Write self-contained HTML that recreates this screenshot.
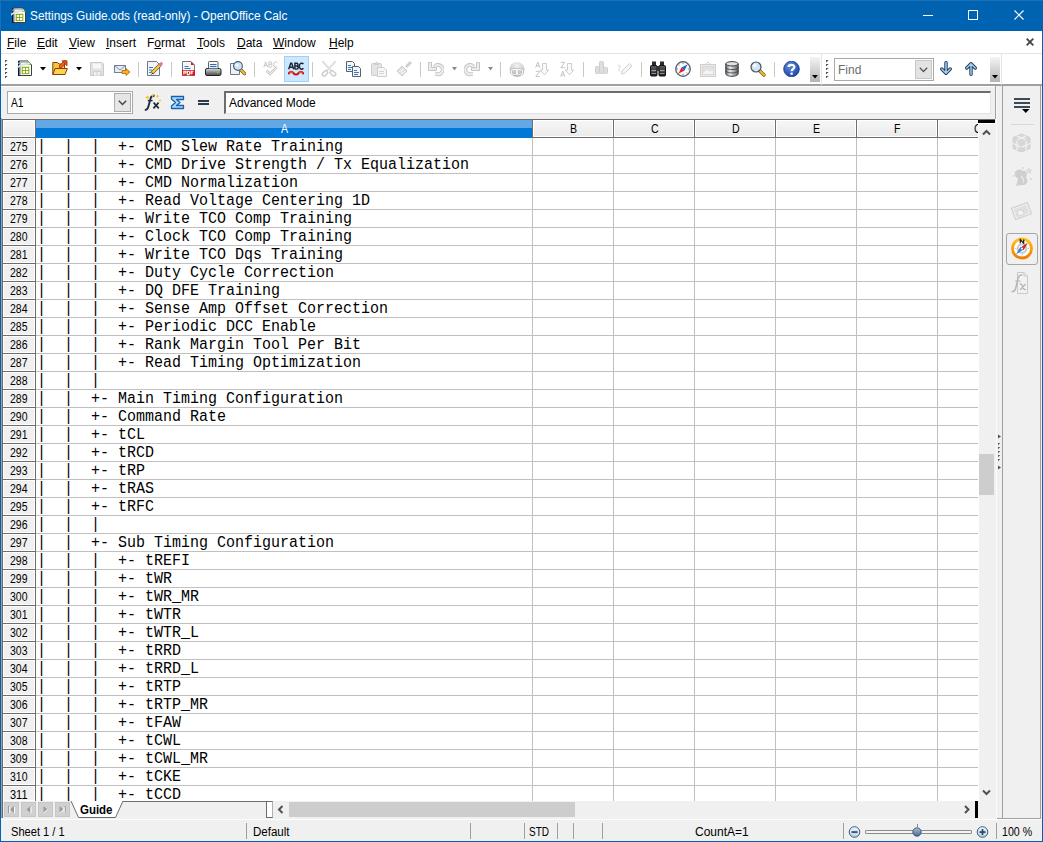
<!DOCTYPE html>
<html><head><meta charset="utf-8"><style>
html,body{margin:0;padding:0;width:1043px;height:842px;overflow:hidden;background:#f0f0f0}
body{position:relative}
</style></head><body>
<div style="position:absolute;left:0px;top:0px;width:1043px;height:842px;background:#f0f0f0"></div>
<div style="position:absolute;left:0px;top:0px;width:1043px;height:31px;background:#0063b1"></div>
<div style="position:absolute;left:0px;top:0px;width:1px;height:842px;background:#0063b1"></div>
<div style="position:absolute;left:1042px;top:0px;width:1px;height:842px;background:#0063b1"></div>
<div style="position:absolute;left:0px;top:841px;width:1043px;height:1px;background:#0063b1"></div>
<div style="position:absolute;left:0px;top:0px;width:1043px;height:1px;background:#1c70b7"></div>
<div style="position:absolute;left:0px;top:0px;width:1px;height:31px;background:#1c70b7"></div>
<div style="position:absolute;left:30.2px;top:9px;white-space:pre;font:12px 'Liberation Sans', sans-serif;color:#fff;transform:scaleX(0.9853);transform-origin:0 0;">Settings Guide.ods (read-only) - OpenOffice Calc</div>
<svg style="position:absolute;left:11px;top:7px;" width="16" height="17" viewBox="0 0 16 17"><path d="M1.5 1H11L14.5 4.5V15.5H1.5Z" fill="#fcfdfd" stroke="#3a4046" stroke-width="1"/>
<rect x="1" y="1" width="1.6" height="15" fill="#0d1824"/>
<rect x="2.6" y="2" width="1.2" height="13" fill="#6f8aa6" opacity="0.7"/>
<path d="M11 1V4.5H14.5" fill="#dfe8c0" stroke="#7f9a20" stroke-width="0.9"/>
<path d="M-0.5 8C3 5 7 3.8 13 3.6" stroke="#d9e1e8" stroke-width="1.7" fill="none"/>
<path d="M1 3.4C4 2.2 7.5 2 11 2.4" stroke="#a9b7c4" stroke-width="1" fill="none"/>
<rect x="4.7" y="6.8" width="7.6" height="7.3" fill="#8aab00"/>
<rect x="5.8" y="7.9" width="2.3" height="2.2" fill="#fff"/><rect x="9" y="7.9" width="2.3" height="2.2" fill="#fff"/>
<rect x="5.8" y="11" width="2.3" height="2.2" fill="#fff"/><rect x="9" y="11" width="2.3" height="2.2" fill="#fff"/></svg>
<div style="position:absolute;left:923px;top:15px;width:10px;height:1px;background:#fff"></div>
<div style="position:absolute;left:968px;top:10px;width:10px;height:10px;border:1px solid #fff;box-sizing:border-box"></div>
<svg style="position:absolute;left:1014px;top:10px;" width="10" height="10" viewBox="0 0 10 10"><path d="M0.5 0.5L9.5 9.5M9.5 0.5L0.5 9.5" stroke="#fff" stroke-width="1.1"/></svg>
<div style="position:absolute;left:1px;top:31px;width:1041px;height:22px;background:#fff"></div>
<div style="position:absolute;left:1px;top:53px;width:1041px;height:1px;background:#e3e3e3"></div>
<div style="position:absolute;left:7px;top:36px;white-space:pre;font:12px 'Liberation Sans', sans-serif;color:#000;"><u style="text-decoration-thickness:1px;text-underline-offset:1px">F</u>ile</div>
<div style="position:absolute;left:37px;top:36px;white-space:pre;font:12px 'Liberation Sans', sans-serif;color:#000;"><u style="text-decoration-thickness:1px;text-underline-offset:1px">E</u>dit</div>
<div style="position:absolute;left:69px;top:36px;white-space:pre;font:12px 'Liberation Sans', sans-serif;color:#000;"><u style="text-decoration-thickness:1px;text-underline-offset:1px">V</u>iew</div>
<div style="position:absolute;left:106px;top:36px;white-space:pre;font:12px 'Liberation Sans', sans-serif;color:#000;"><u style="text-decoration-thickness:1px;text-underline-offset:1px">I</u>nsert</div>
<div style="position:absolute;left:147px;top:36px;white-space:pre;font:12px 'Liberation Sans', sans-serif;color:#000;">F<u style="text-decoration-thickness:1px;text-underline-offset:1px">o</u>rmat</div>
<div style="position:absolute;left:197px;top:36px;white-space:pre;font:12px 'Liberation Sans', sans-serif;color:#000;"><u style="text-decoration-thickness:1px;text-underline-offset:1px">T</u>ools</div>
<div style="position:absolute;left:237px;top:36px;white-space:pre;font:12px 'Liberation Sans', sans-serif;color:#000;"><u style="text-decoration-thickness:1px;text-underline-offset:1px">D</u>ata</div>
<div style="position:absolute;left:273px;top:36px;white-space:pre;font:12px 'Liberation Sans', sans-serif;color:#000;"><u style="text-decoration-thickness:1px;text-underline-offset:1px">W</u>indow</div>
<div style="position:absolute;left:329px;top:36px;white-space:pre;font:12px 'Liberation Sans', sans-serif;color:#000;"><u style="text-decoration-thickness:1px;text-underline-offset:1px">H</u>elp</div>
<svg style="position:absolute;left:1026px;top:38px;" width="8" height="8" viewBox="0 0 8 8"><path d="M0.7 0.7L7.3 7.3M7.3 0.7L0.7 7.3" stroke="#444" stroke-width="1.8"/></svg>
<div style="position:absolute;left:1px;top:54px;width:1041px;height:31px;background:#fff"></div>
<div style="position:absolute;left:1px;top:84px;width:1041px;height:2px;background:#a0a0a0"></div>
<svg style="position:absolute;left:5px;top:60px;" width="3" height="20" viewBox="0 0 3 20"><path d="M0 0H2.6L0 2.6Z" fill="#505050"/><path d="M0 4H2.6L0 6.6Z" fill="#505050"/><path d="M0 8H2.6L0 10.6Z" fill="#505050"/><path d="M0 12H2.6L0 14.6Z" fill="#505050"/><path d="M0 16H2.6L0 18.6Z" fill="#505050"/></svg>
<svg style="position:absolute;left:17px;top:60px;" width="16" height="16" viewBox="0 0 16 16"><path d="M1.5 1H11L14.5 4.5V15.5H1.5Z" fill="#fcfdfd" stroke="#3a4046" stroke-width="1"/>
<rect x="1" y="1" width="1.6" height="15" fill="#0d1824"/>
<rect x="2.6" y="2" width="1.2" height="13" fill="#6f8aa6" opacity="0.7"/>
<path d="M11 1V4.5H14.5" fill="#dfe8c0" stroke="#7f9a20" stroke-width="0.9"/>
<path d="M-0.5 8C3 5 7 3.8 13 3.6" stroke="#d9e1e8" stroke-width="1.7" fill="none"/>
<path d="M1 3.4C4 2.2 7.5 2 11 2.4" stroke="#a9b7c4" stroke-width="1" fill="none"/>
<rect x="4.7" y="6.8" width="7.6" height="7.3" fill="#8aab00"/>
<rect x="5.8" y="7.9" width="2.3" height="2.2" fill="#fff"/><rect x="9" y="7.9" width="2.3" height="2.2" fill="#fff"/>
<rect x="5.8" y="11" width="2.3" height="2.2" fill="#fff"/><rect x="9" y="11" width="2.3" height="2.2" fill="#fff"/></svg>
<svg style="position:absolute;left:40px;top:67px;" width="6" height="4" viewBox="0 0 6 4"><path d="M0 0H6L3.0 3.5Z" fill="#000"/></svg>
<svg style="position:absolute;left:52px;top:60px;" width="16" height="16" viewBox="0 0 16 16"><path d="M0.8 2.5H5.5L7 4H12.5V14.5H0.8Z" fill="#f6c43a" stroke="#8b3b05" stroke-width="1"/>
<path d="M3 8.5H15.3L13 14.5H0.8Z" fill="#fbd44e" stroke="#8b3b05" stroke-width="1"/>
<path d="M8.5 6.5L13 2" stroke="#c2310a" stroke-width="3.2" stroke-linecap="round"/>
<path d="M8.5 6.5L13 2" stroke="#f2702a" stroke-width="1.6" stroke-linecap="round"/>
<path d="M10 0.8H15V5.8Z" fill="#e3501c" stroke="#a62a08" stroke-width="0.8"/></svg>
<svg style="position:absolute;left:76px;top:67px;" width="6" height="4" viewBox="0 0 6 4"><path d="M0 0H6L3.0 3.5Z" fill="#000"/></svg>
<svg style="position:absolute;left:90px;top:62px;" width="14" height="14" viewBox="0 0 14 14"><path d="M0.5 0.5H12L13.5 2V13.5H0.5Z" fill="#e2e2e2" stroke="#c9c9c9" stroke-width="1"/>
<rect x="3" y="1.5" width="8" height="5" fill="#f7f7f7"/>
<rect x="3" y="9" width="8" height="4.5" fill="#cfcfcf"/><rect x="4" y="10" width="2.5" height="3.5" fill="#f2f2f2"/><rect x="7.5" y="10" width="2.5" height="3.5" fill="#f2f2f2"/></svg>
<svg style="position:absolute;left:114px;top:65px;" width="16" height="11" viewBox="0 0 16 11"><rect x="0.5" y="0.5" width="11" height="7" fill="#e7edf3" stroke="#6f8193" stroke-width="1"/>
<path d="M0.8 0.8L6 5L11.2 0.8" fill="none" stroke="#7a8a9a" stroke-width="0.9"/>
<path d="M8 5.5H12V3.5L16 7L12 10.5V8.5H8Z" fill="#f7b42c" stroke="#b86a0a" stroke-width="0.9"/></svg>
<div style="position:absolute;left:138px;top:62px;width:1px;height:15px;background:#c9c9c9"></div>
<svg style="position:absolute;left:147px;top:61px;" width="16" height="16" viewBox="0 0 16 16"><path d="M0.5 0.5H9.5L12.5 3.5V14.5H0.5Z" fill="#f3f6f9" stroke="#6c7a88" stroke-width="1"/>
<rect x="2" y="6" width="4" height="1" fill="#3a78c0"/><rect x="2" y="8.5" width="3" height="1" fill="#3a78c0"/><rect x="2" y="11" width="4" height="1" fill="#3a78c0"/>
<path d="M5 12L13.5 3.5" stroke="#5a4a20" stroke-width="3.6" stroke-linecap="butt"/>
<path d="M5 12L13.5 3.5" stroke="#f8d040" stroke-width="2.4"/>
<path d="M12.3 4.7L15.2 1.8" stroke="#e77a8c" stroke-width="3"/>
<path d="M3.5 14L5.6 11.4L6.6 12.4Z" fill="#333"/></svg>
<div style="position:absolute;left:171px;top:62px;width:1px;height:15px;background:#c9c9c9"></div>
<svg style="position:absolute;left:182px;top:61px;" width="13" height="15" viewBox="0 0 13 15"><path d="M0.5 0.5H9L12.5 4V14.5H0.5Z" fill="#f4f6f8" stroke="#6c7a88" stroke-width="1"/>
<path d="M9 0.5L12.5 4H9Z" fill="#e01b1b"/>
<rect x="2.5" y="5" width="4" height="1" fill="#3a78c0"/><rect x="2.5" y="7" width="6" height="1" fill="#3a78c0"/>
<rect x="0" y="9" width="13" height="5.5" fill="#dc1616"/>
<path d="M1.8 13.6V10.2H3.9V12H1.8M5.3 10.2H6.9L7.6 10.9V12.9L6.9 13.6H5.3ZM9.1 13.6V10.2H11.5M9.1 11.9H11" fill="none" stroke="#fff" stroke-width="1.05"/></svg>
<svg style="position:absolute;left:205px;top:61px;" width="17" height="15" viewBox="0 0 17 15"><rect x="3.5" y="0.5" width="9.5" height="8.5" rx="0.8" fill="#f7f9fb" stroke="#56606a" stroke-width="1"/>
<rect x="5" y="3" width="6.5" height="1.1" fill="#2f6fb3"/><rect x="5" y="5" width="6.5" height="1.1" fill="#2f6fb3"/>
<defs><linearGradient id="pg" x1="0" y1="0" x2="0" y2="1"><stop offset="0" stop-color="#e2e4e6"/><stop offset="0.5" stop-color="#8b8e91"/><stop offset="0.75" stop-color="#6a6d70"/><stop offset="1" stop-color="#4b4e51"/></linearGradient></defs>
<rect x="0.5" y="7.5" width="15.5" height="7" rx="1.6" fill="url(#pg)" stroke="#1e2022" stroke-width="1"/>
<rect x="3.5" y="7.5" width="9.5" height="1" fill="#b9bcbf"/>
<circle cx="12.8" cy="11.3" r="0.9" fill="#6ee23c"/></svg>
<svg style="position:absolute;left:230px;top:61px;" width="16" height="16" viewBox="0 0 16 16"><path d="M0.5 2.5H7L9.5 5V13.5H0.5Z" fill="#eef2f6" stroke="#6c7a88" stroke-width="1"/>
<path d="M10.5 8.5L14.6 12.6" stroke="#7a5200" stroke-width="3.2" stroke-linecap="round"/>
<path d="M10.5 8.5L14.6 12.6" stroke="#f3c23a" stroke-width="1.8" stroke-linecap="round"/>
<circle cx="8" cy="5" r="4.4" fill="#cfe3f3" stroke="#4a5d70" stroke-width="1.1"/>
<circle cx="7" cy="4" r="1.6" fill="#fff" opacity="0.8"/></svg>
<div style="position:absolute;left:254px;top:62px;width:1px;height:15px;background:#c9c9c9"></div>
<svg style="position:absolute;left:263px;top:61px;" width="16" height="16" viewBox="0 0 16 16"><path d="M0.8 6.2L2.7 0.8L4.6 6.2M1.4 4.4H4M5.9 6.2V0.8H7.8C9.1 0.8 9.1 3.3 7.8 3.3H5.9M7.8 3.3C9.4 3.3 9.4 6.2 7.8 6.2H5.9M14.3 1.6C13.6 0.7 11.4 0.6 10.9 2C10.5 3.2 10.6 5.2 12 5.9C13 6.3 13.9 5.9 14.3 5.3" fill="none" stroke="#c2c2c2" stroke-width="0.9"/>
<path d="M3.5 9.5L7 13L13.5 6.5" fill="none" stroke="#c9c9c9" stroke-width="2.6"/>
<path d="M3.5 9.5L7 13L13.5 6.5" fill="none" stroke="#f4f4f4" stroke-width="1"/></svg>
<div style="position:absolute;left:284px;top:56px;width:25px;height:26px;background:#cce8ff;border:1px solid #99d1ff;box-sizing:border-box"></div>
<svg style="position:absolute;left:288px;top:62px;" width="16" height="15" viewBox="0 0 16 15"><path d="M0.7 7.2L2.7 1.2H3.7L5.7 7.2M1.6 5.2H4.8M6.9 7.2V1.3H8.7C10.4 1.3 10.4 4 8.7 4H6.9M8.7 4C10.7 4 10.7 7.1 8.7 7.1H6.9M15.4 2.1C14.6 1.1 13 1 12.2 1.7C11.1 2.6 11.1 5.7 12.2 6.5C13 7.2 14.6 7.1 15.4 6.2" fill="none" stroke="#1c2733" stroke-width="1.45"/>
<path d="M0.8 11.3C2.3 9.2 4 9.2 5.6 11.3C6.8 12.9 9.2 12.9 10.4 11.3C12 9.2 13.7 9.2 15.2 11.3" fill="none" stroke="#d81016" stroke-width="2.2" stroke-linecap="round"/>
<path d="M1.5 10.6C2.5 9.7 3.8 9.7 4.8 10.6M11.2 10.6C12.2 9.7 13.5 9.7 14.5 10.6" fill="none" stroke="#ff9a3a" stroke-width="0.7"/></svg>
<div style="position:absolute;left:312px;top:62px;width:1px;height:15px;background:#c9c9c9"></div>
<svg style="position:absolute;left:321px;top:61px;" width="16" height="16" viewBox="0 0 16 16"><path d="M1.5 0.5L10 9.5M14.5 0.5L6 9.5" stroke="#d2d2d2" stroke-width="1.8"/>
<path d="M1.5 0.5L10 9.5M14.5 0.5L6 9.5" stroke="#f4f4f4" stroke-width="0.6"/>
<rect x="1" y="10.5" width="6" height="3.6" rx="1.8" transform="rotate(-45 4 12.3)" fill="none" stroke="#cdcdcd" stroke-width="1.5"/>
<rect x="9" y="10.5" width="6" height="3.6" rx="1.8" transform="rotate(45 12 12.3)" fill="none" stroke="#cdcdcd" stroke-width="1.5"/></svg>
<svg style="position:absolute;left:346px;top:61px;" width="16" height="16" viewBox="0 0 16 16"><path d="M0.5 0.5H6.5L8.5 2.5V10.5H0.5Z" fill="#f4f6f9" stroke="#56616d" stroke-width="1"/>
<rect x="2" y="4" width="3" height="1" fill="#3a78c0"/><rect x="2" y="6" width="4" height="1" fill="#3a78c0"/><rect x="2" y="8" width="3" height="1" fill="#3a78c0"/>
<path d="M6.5 5.5H12.5L14.5 7.5V15.5H6.5Z" fill="#f4f6f9" stroke="#56616d" stroke-width="1"/>
<rect x="8" y="9" width="3" height="1" fill="#3a78c0"/><rect x="8" y="11" width="5" height="1" fill="#3a78c0"/><rect x="8" y="13" width="4" height="1" fill="#3a78c0"/></svg>
<svg style="position:absolute;left:371px;top:61px;" width="16" height="16" viewBox="0 0 16 16"><rect x="0.5" y="2.5" width="10" height="12" rx="1" fill="#e4e4e4" stroke="#cdcdcd" stroke-width="1"/>
<path d="M3.5 3.5L5.5 0.8L7.5 3.5Z" fill="#d8d8d8" stroke="#c8c8c8" stroke-width="0.8"/>
<path d="M6.5 6.5H13L15.5 9V15.5H6.5Z" fill="#f6f6f6" stroke="#cdcdcd" stroke-width="1"/>
<rect x="8" y="10" width="5" height="1" fill="#d4d4d4"/><rect x="8" y="12" width="5" height="1" fill="#d4d4d4"/></svg>
<svg style="position:absolute;left:396px;top:61px;" width="16" height="16" viewBox="0 0 16 16"><path d="M10 6L15 1" stroke="#cfcfcf" stroke-width="2.8"/>
<path d="M1 10L6 15L11 10L6 5Z" fill="#e2e2e2" stroke="#cacaca" stroke-width="1"/>
<path d="M3 11L8 8M5 13L10 10" stroke="#f8f8f8" stroke-width="0.9"/></svg>
<div style="position:absolute;left:420px;top:62px;width:1px;height:15px;background:#c9c9c9"></div>
<svg style="position:absolute;left:428px;top:61px;" width="16" height="16" viewBox="0 0 16 16"><path d="M6.4 5.8A4.6 4.6 0 1 1 9.2 13.1H7" fill="none" stroke="#c9c9c9" stroke-width="3.8"/>
<path d="M6.4 5.8A4.6 4.6 0 1 1 9.2 13.1H7" fill="none" stroke="#eeeeee" stroke-width="1.8"/>
<path d="M0.5 1.5H3.5V6.5H8.5V9.5H0.5Z" fill="#ececec" stroke="#c6c6c6" stroke-width="1" stroke-linejoin="round"/></svg>
<svg style="position:absolute;left:452px;top:67px;" width="5" height="4" viewBox="0 0 5 4"><path d="M0 0H5L2.5 3.5Z" fill="#8a8a8a"/></svg>
<svg style="position:absolute;left:464px;top:61px;" width="16" height="16" viewBox="0 0 16 16"><g transform="translate(16 0) scale(-1 1)"><path d="M6.4 5.8A4.6 4.6 0 1 1 9.2 13.1H7" fill="none" stroke="#c9c9c9" stroke-width="3.8"/>
<path d="M6.4 5.8A4.6 4.6 0 1 1 9.2 13.1H7" fill="none" stroke="#eeeeee" stroke-width="1.8"/>
<path d="M0.5 1.5H3.5V6.5H8.5V9.5H0.5Z" fill="#ececec" stroke="#c6c6c6" stroke-width="1" stroke-linejoin="round"/></g></svg>
<svg style="position:absolute;left:488px;top:67px;" width="5" height="4" viewBox="0 0 5 4"><path d="M0 0H5L2.5 3.5Z" fill="#8a8a8a"/></svg>
<div style="position:absolute;left:500px;top:62px;width:1px;height:15px;background:#c9c9c9"></div>
<svg style="position:absolute;left:509px;top:61px;" width="16" height="16" viewBox="0 0 16 16"><defs><radialGradient id="gg" cx="0.5" cy="0.25" r="0.75"><stop offset="0" stop-color="#f2f2f2"/><stop offset="0.6" stop-color="#d2d2d2"/><stop offset="1" stop-color="#bcbcbc"/></radialGradient></defs>
<circle cx="8" cy="8.5" r="7.5" fill="url(#gg)"/>
<path d="M1.5 11C4 13 12 13 14.5 11" stroke="#c4c4c4" stroke-width="1" fill="none"/>
<rect x="2.2" y="8.6" width="6.6" height="4.6" rx="2.3" fill="none" stroke="#a8a8a8" stroke-width="2.2"/>
<rect x="7.2" y="8.6" width="6.6" height="4.6" rx="2.3" fill="none" stroke="#a8a8a8" stroke-width="2.2"/>
<rect x="2.2" y="8.6" width="6.6" height="4.6" rx="2.3" fill="none" stroke="#fafafa" stroke-width="1.1"/>
<rect x="7.2" y="8.6" width="6.6" height="4.6" rx="2.3" fill="none" stroke="#fafafa" stroke-width="1.1"/></svg>
<svg style="position:absolute;left:534px;top:61px;" width="16" height="16" viewBox="0 0 16 16"><path d="M1.6 6.7L3.8 1.2L5.9 6.7M2.4 4.9H5.1" fill="none" stroke="#bdbdbd" stroke-width="0.9"/><g transform="translate(0 9)"><path d="M1.8 1.4H5.8L1.8 6.6H5.8" fill="none" stroke="#bdbdbd" stroke-width="0.9"/></g><path d="M8.5 2.5H12.5V9H14.8L10.5 13.8L6.2 9H8.5Z" fill="#fafafa" stroke="#c2c2c2" stroke-width="0.8"/></svg>
<svg style="position:absolute;left:559px;top:61px;" width="16" height="16" viewBox="0 0 16 16"><path d="M1.8 1.4H5.8L1.8 6.6H5.8" fill="none" stroke="#bdbdbd" stroke-width="0.9"/><g transform="translate(0 9)"><path d="M1.6 6.7L3.8 1.2L5.9 6.7M2.4 4.9H5.1" fill="none" stroke="#bdbdbd" stroke-width="0.9"/></g><path d="M8.5 2.5H12.5V9H14.8L10.5 13.8L6.2 9H8.5Z" fill="#fafafa" stroke="#c2c2c2" stroke-width="0.8"/></svg>
<div style="position:absolute;left:583px;top:62px;width:1px;height:15px;background:#c9c9c9"></div>
<svg style="position:absolute;left:595px;top:61px;" width="13" height="13" viewBox="0 0 13 13"><rect x="4.5" y="0.5" width="4" height="12" rx="1" fill="#dedede" stroke="#cdcdcd"/>
<rect x="0.5" y="5.5" width="4" height="7" rx="1" fill="#dedede" stroke="#cdcdcd"/>
<rect x="8.5" y="6.5" width="4" height="6" rx="1" fill="#dedede" stroke="#cdcdcd"/></svg>
<svg style="position:absolute;left:617px;top:62px;" width="16" height="13" viewBox="0 0 16 13"><path d="M5 9L12.5 1.5L15 4L7.5 11.5L4.5 12Z" fill="#f6f6f6" stroke="#d0d0d0" stroke-width="1"/>
<path d="M0.5 4C2 2.5 3.5 3 3 5C2.5 7 1 8 2.5 9.5" fill="none" stroke="#d6d6d6" stroke-width="1"/></svg>
<div style="position:absolute;left:641px;top:62px;width:1px;height:15px;background:#c9c9c9"></div>
<svg style="position:absolute;left:650px;top:61px;" width="16" height="16" viewBox="0 0 16 16"><defs><linearGradient id="bg1" x1="0" y1="0" x2="0" y2="1"><stop offset="0" stop-color="#5a5e62"/><stop offset="1" stop-color="#1e2022"/></linearGradient></defs>
<rect x="2" y="0.5" width="4" height="4" fill="#2a2c2e"/><rect x="10" y="0.5" width="4" height="4" fill="#2a2c2e"/>
<rect x="0.5" y="4.5" width="6.5" height="10.5" rx="1" fill="url(#bg1)" stroke="#111" stroke-width="1"/>
<rect x="9" y="4.5" width="6.5" height="10.5" rx="1" fill="url(#bg1)" stroke="#111" stroke-width="1"/>
<rect x="6" y="5" width="4" height="5" fill="#333"/>
<rect x="1.5" y="9" width="4.5" height="1.2" fill="#9aa0a6"/><rect x="10" y="9" width="4.5" height="1.2" fill="#9aa0a6"/>
<rect x="1.5" y="12" width="4.5" height="1" fill="#8a9096"/><rect x="10" y="12" width="4.5" height="1" fill="#8a9096"/></svg>
<svg style="position:absolute;left:675px;top:61px;" width="16" height="16" viewBox="0 0 16 16"><defs><radialGradient id="cp" cx="0.5" cy="0.5" r="0.5"><stop offset="0.7" stop-color="#fbfdff"/><stop offset="1" stop-color="#cfd8e0"/></radialGradient></defs>
<circle cx="8" cy="8" r="7.3" fill="url(#cp)" stroke="#4f5a64" stroke-width="1.2"/>
<path d="M8 1.6V3.2M8 12.8V14.4M1.6 8H3.2M12.8 8H14.4M3.5 3.5L4.5 4.5M12.5 12.5L11.5 11.5M3.5 12.5L4.5 11.5M12.5 3.5L11.5 4.5" stroke="#6a737c" stroke-width="0.8"/>
<path d="M12.4 3.6L6.4 6.4L9.6 9.6Z" fill="#2563d6"/><path d="M3.6 12.4L6.4 6.4L9.6 9.6Z" fill="#e61e1a"/></svg>
<svg style="position:absolute;left:700px;top:61px;" width="16" height="16" viewBox="0 0 16 16"><rect x="0.5" y="3.5" width="15" height="12" fill="#ebebeb" stroke="#cfcfcf" stroke-width="1"/>
<rect x="2.5" y="5.5" width="11" height="8" fill="#e2e2e2" stroke="#d8d8d8"/>
<path d="M5.5 3.5L8 1L10.5 3.5" fill="none" stroke="#d2d2d2"/>
<path d="M3 12L7 9L10 11L13 9V13H3Z" fill="#f5f5f5"/></svg>
<svg style="position:absolute;left:725px;top:61px;" width="14" height="16" viewBox="0 0 14 16"><defs><linearGradient id="dbg" x1="0" y1="0" x2="1" y2="0"><stop offset="0" stop-color="#6a6d70"/><stop offset="0.35" stop-color="#eceeef"/><stop offset="1" stop-color="#5c5f62"/></linearGradient></defs>
<path d="M0.8 2.8V12.8C0.8 14.2 3.6 15.3 7 15.3C10.4 15.3 13.2 14.2 13.2 12.8V2.8" fill="url(#dbg)" stroke="#3d4043" stroke-width="1"/>
<ellipse cx="7" cy="2.8" rx="6.2" ry="2.2" fill="#dfe2e4" stroke="#3d4043" stroke-width="1"/>
<path d="M0.8 6.3C0.8 7.7 3.6 8.6 7 8.6C10.4 8.6 13.2 7.7 13.2 6.3M0.8 9.6C0.8 11 3.6 11.9 7 11.9C10.4 11.9 13.2 11 13.2 9.6" fill="none" stroke="#3d4043" stroke-width="0.9"/></svg>
<svg style="position:absolute;left:750px;top:61px;" width="16" height="16" viewBox="0 0 16 16"><path d="M9.5 9.5L14 14" stroke="#7a5200" stroke-width="3.2" stroke-linecap="round"/>
<path d="M9.5 9.5L14 14" stroke="#f3c23a" stroke-width="1.8" stroke-linecap="round"/>
<circle cx="6" cy="6" r="5" fill="#d2e5f4" stroke="#44525f" stroke-width="1.2"/>
<circle cx="4.8" cy="4.6" r="1.8" fill="#fff" opacity="0.8"/></svg>
<div style="position:absolute;left:774px;top:62px;width:1px;height:15px;background:#c9c9c9"></div>
<svg style="position:absolute;left:783px;top:61px;" width="17" height="16" viewBox="0 0 17 16"><defs><radialGradient id="hg" cx="0.4" cy="0.3" r="0.8"><stop offset="0" stop-color="#5f8ce0"/><stop offset="1" stop-color="#153f9c"/></radialGradient></defs>
<circle cx="8.5" cy="8" r="7.8" fill="url(#hg)" stroke="#123a8a" stroke-width="0.8"/>
<path d="M5.6 5.9C5.6 3.2 11.4 3 11.4 6C11.4 8 8.6 8.3 8.6 10.3" fill="none" stroke="#fff" stroke-width="2.3"/><rect x="7.45" y="11.6" width="2.3" height="2.2" fill="#fff"/></svg>
<div style="position:absolute;left:810px;top:57px;width:10px;height:25px;background:linear-gradient(#f4f4f4,#b4b4b4)"></div>
<svg style="position:absolute;left:812px;top:75px;" width="6" height="4" viewBox="0 0 6 4"><path d="M0 0H6L3 3.5Z" fill="#000"/></svg>
<div style="position:absolute;left:821px;top:54px;width:1px;height:31px;background:#e3e3e3"></div>
<svg style="position:absolute;left:826px;top:60px;" width="3" height="20" viewBox="0 0 3 20"><path d="M0 0H2.6L0 2.6Z" fill="#505050"/><path d="M0 4H2.6L0 6.6Z" fill="#505050"/><path d="M0 8H2.6L0 10.6Z" fill="#505050"/><path d="M0 12H2.6L0 14.6Z" fill="#505050"/><path d="M0 16H2.6L0 18.6Z" fill="#505050"/></svg>
<div style="position:absolute;left:834px;top:58px;width:100px;height:23px;background:#fff;border:1px solid #a9a9a9;box-sizing:border-box"></div>
<div style="position:absolute;left:915px;top:60px;width:17px;height:19px;background:#e3e3e3;border:1px solid #c6c6c6;box-sizing:border-box"></div>
<svg style="position:absolute;left:919px;top:67px;" width="9" height="6" viewBox="0 0 9 6"><path d="M0.8 0.8L4.5 4.5L8.2 0.8" stroke="#555" fill="none" stroke-width="1.3"/></svg>
<div style="position:absolute;left:838px;top:63px;white-space:pre;font:12px 'Liberation Sans', sans-serif;color:#6d6d6d;">Find</div>
<svg style="position:absolute;left:940px;top:61px;" width="12" height="14" viewBox="0 0 12 14"><path d="M6 1.8V12M1.8 8L6 12.2L10.2 8" fill="none" stroke="#1d3a5c" stroke-width="3.4" stroke-linecap="round" stroke-linejoin="round"/>
<path d="M6 1.8V12M1.8 8L6 12.2L10.2 8" fill="none" stroke="#a9cfee" stroke-width="1.5" stroke-linecap="round" stroke-linejoin="round"/></svg>
<svg style="position:absolute;left:965px;top:62px;" width="12" height="14" viewBox="0 0 12 14"><path d="M6 12.2V2M1.8 6L6 1.8L10.2 6" fill="none" stroke="#1d3a5c" stroke-width="3.4" stroke-linecap="round" stroke-linejoin="round"/>
<path d="M6 12.2V2M1.8 6L6 1.8L10.2 6" fill="none" stroke="#a9cfee" stroke-width="1.5" stroke-linecap="round" stroke-linejoin="round"/></svg>
<div style="position:absolute;left:990px;top:57px;width:10px;height:25px;background:linear-gradient(#f4f4f4,#b4b4b4)"></div>
<svg style="position:absolute;left:992px;top:75px;" width="6" height="4" viewBox="0 0 6 4"><path d="M0 0H6L3 3.5Z" fill="#000"/></svg>
<div style="position:absolute;left:1001px;top:54px;width:1px;height:31px;background:#e3e3e3"></div>
<div style="position:absolute;left:1px;top:86px;width:994px;height:33px;background:#f0f0f0"></div>
<div style="position:absolute;left:1px;top:86px;width:994px;height:1px;background:#fff"></div>
<div style="position:absolute;left:7px;top:91px;width:126px;height:23px;background:#fff;border:1px solid #a9a9a9;box-sizing:border-box"></div>
<div style="position:absolute;left:114px;top:93px;width:17px;height:19px;background:#e6e6e6;border:1px solid #adadad;box-sizing:border-box"></div>
<svg style="position:absolute;left:118px;top:100px;" width="9" height="6" viewBox="0 0 9 6"><path d="M0.8 0.8L4.5 4.5L8.2 0.8" stroke="#444" fill="none" stroke-width="1.4"/></svg>
<div style="position:absolute;left:11.0px;top:96px;white-space:pre;font:12px 'Liberation Sans', sans-serif;color:#000;transform:scaleX(0.8547);transform-origin:0 0;">A1</div>
<div style="position:absolute;left:224px;top:91px;width:767px;height:23px;background:#fff;border-top:2px solid #6d6d6d;border-left:2px solid #6d6d6d;border-right:1px solid #e3e3e3;border-bottom:1px solid #e3e3e3;box-sizing:border-box"></div>
<div style="position:absolute;left:229px;top:96px;white-space:pre;font:12px 'Liberation Sans', sans-serif;color:#000;">Advanced Mode</div>
<div style="position:absolute;left:198px;top:100px;width:11px;height:2px;background:#2a3a4a"></div>
<div style="position:absolute;left:198px;top:103px;width:11px;height:2px;background:#2a3a4a"></div>
<svg style="position:absolute;left:143px;top:93px;" width="20" height="18" viewBox="0 0 20 18"><path d="M1.8 16.8C3.8 17.2 4.8 15.8 5.4 13.6L7.6 5.2C8.2 3.2 9.4 2.4 11.6 2.8" fill="none" stroke="#1f2d3b" stroke-width="1.9"/><path d="M4.8 7.6H9.6" stroke="#1f2d3b" stroke-width="1.4"/><path d="M10.6 9.6L15.8 15.4M15.6 9.6L10.4 15.4" stroke="#1f2d3b" stroke-width="1.7"/><path d="M4.4 2.4L5.2 3.6L6.4 4.4L5.2 5.2L4.4 6.4L3.6 5.2L2.4 4.4L3.6 3.6Z" fill="#f7c51a"/><path d="M9.5 0.8L10.1 1.9L11.2 2.5L10.1 3.1L9.5 4.2L8.9 3.1L7.8 2.5L8.9 1.9Z" fill="#f7c51a"/><path d="M14.5 1.5L15.1 2.6L16.2 3.2L15.1 3.8L14.5 4.9L13.9 3.8L12.8 3.2L13.9 2.6Z" fill="#f7c51a"/><path d="M17 6L17.5 7L18.5 7.5L17.5 8L17 9L16.5 8L15.5 7.5L16.5 7Z" fill="#f7c51a"/></svg>
<svg style="position:absolute;left:170px;top:95px;" width="16" height="15" viewBox="0 0 16 15"><path d="M1.5 1.5H13.5V4.5H6.5L10 7.5L6.5 10.5H13.5V13.5H1.5V11L5.5 7.5L1.5 4Z" fill="#a8dcff" stroke="#1b5fae" stroke-width="1.3" stroke-linejoin="round"/></svg>
<div style="position:absolute;left:2px;top:119px;width:993px;height:1px;background:#6d6d6d"></div>
<div style="position:absolute;left:36px;top:120px;width:942px;height:17px;background:linear-gradient(#f7f7f7,#ebebeb)"></div>
<div style="position:absolute;left:36px;top:120px;width:496px;height:8px;background:#62a8e4"></div>
<div style="position:absolute;left:36px;top:128px;width:496px;height:10px;background:#0078d7"></div>
<div style="position:absolute;left:281.48px;top:122px;white-space:pre;font:12px 'Liberation Sans', sans-serif;color:#fff;transform:scaleX(0.8800);transform-origin:0 0;">A</div>
<div style="position:absolute;left:533px;top:120px;width:80px;height:17px;border:1px solid #fff;box-sizing:border-box;background:linear-gradient(#f6f6f6,#ebebeb)"></div>
<div style="position:absolute;left:569.98px;top:122px;white-space:pre;font:12px 'Liberation Sans', sans-serif;color:#000;transform:scaleX(0.8800);transform-origin:0 0;">B</div>
<div style="position:absolute;left:532px;top:120px;width:1px;height:18px;background:#6d6d6d"></div>
<div style="position:absolute;left:614px;top:120px;width:80px;height:17px;border:1px solid #fff;box-sizing:border-box;background:linear-gradient(#f6f6f6,#ebebeb)"></div>
<div style="position:absolute;left:650.71px;top:122px;white-space:pre;font:12px 'Liberation Sans', sans-serif;color:#000;transform:scaleX(0.8800);transform-origin:0 0;">C</div>
<div style="position:absolute;left:613px;top:120px;width:1px;height:18px;background:#6d6d6d"></div>
<div style="position:absolute;left:695px;top:120px;width:80px;height:17px;border:1px solid #fff;box-sizing:border-box;background:linear-gradient(#f6f6f6,#ebebeb)"></div>
<div style="position:absolute;left:731.71px;top:122px;white-space:pre;font:12px 'Liberation Sans', sans-serif;color:#000;transform:scaleX(0.8800);transform-origin:0 0;">D</div>
<div style="position:absolute;left:694px;top:120px;width:1px;height:18px;background:#6d6d6d"></div>
<div style="position:absolute;left:776px;top:120px;width:80px;height:17px;border:1px solid #fff;box-sizing:border-box;background:linear-gradient(#f6f6f6,#ebebeb)"></div>
<div style="position:absolute;left:812.98px;top:122px;white-space:pre;font:12px 'Liberation Sans', sans-serif;color:#000;transform:scaleX(0.8800);transform-origin:0 0;">E</div>
<div style="position:absolute;left:775px;top:120px;width:1px;height:18px;background:#6d6d6d"></div>
<div style="position:absolute;left:857px;top:120px;width:80px;height:17px;border:1px solid #fff;box-sizing:border-box;background:linear-gradient(#f6f6f6,#ebebeb)"></div>
<div style="position:absolute;left:894.25px;top:122px;white-space:pre;font:12px 'Liberation Sans', sans-serif;color:#000;transform:scaleX(0.8800);transform-origin:0 0;">F</div>
<div style="position:absolute;left:856px;top:120px;width:1px;height:18px;background:#6d6d6d"></div>
<div style="position:absolute;left:938px;top:120px;width:80px;height:17px;border:1px solid #fff;box-sizing:border-box;background:linear-gradient(#f6f6f6,#ebebeb)"></div>
<div style="position:absolute;left:974.38px;top:122px;white-space:pre;font:12px 'Liberation Sans', sans-serif;color:#000;transform:scaleX(0.8800);transform-origin:0 0;">G</div>
<div style="position:absolute;left:937px;top:120px;width:1px;height:18px;background:#6d6d6d"></div>
<div style="position:absolute;left:532px;top:137px;width:446px;height:1px;background:#6d6d6d"></div>
<div style="position:absolute;left:3px;top:120px;width:32px;height:17px;border:1px solid #fff;box-sizing:border-box;background:linear-gradient(#f6f6f6,#ebebeb)"></div>
<div style="position:absolute;left:1px;top:118px;width:1px;height:700px;background:#a0a0a0"></div>
<div style="position:absolute;left:2px;top:119px;width:1px;height:699px;background:#6d6d6d"></div>
<div style="position:absolute;left:35px;top:119px;width:1px;height:682px;background:#6d6d6d"></div>
<div style="position:absolute;left:3px;top:137px;width:32px;height:1px;background:#6d6d6d"></div>
<div style="position:absolute;left:36px;top:138px;width:942px;height:663px;background:#fff"></div>
<div style="position:absolute;left:36px;top:155px;width:942px;height:1px;background:#c0c0c0"></div>
<div style="position:absolute;left:3px;top:155px;width:32px;height:1px;background:#6d6d6d"></div>
<div style="position:absolute;left:36px;top:173px;width:942px;height:1px;background:#c0c0c0"></div>
<div style="position:absolute;left:3px;top:173px;width:32px;height:1px;background:#6d6d6d"></div>
<div style="position:absolute;left:36px;top:191px;width:942px;height:1px;background:#c0c0c0"></div>
<div style="position:absolute;left:3px;top:191px;width:32px;height:1px;background:#6d6d6d"></div>
<div style="position:absolute;left:36px;top:209px;width:942px;height:1px;background:#c0c0c0"></div>
<div style="position:absolute;left:3px;top:209px;width:32px;height:1px;background:#6d6d6d"></div>
<div style="position:absolute;left:36px;top:227px;width:942px;height:1px;background:#c0c0c0"></div>
<div style="position:absolute;left:3px;top:227px;width:32px;height:1px;background:#6d6d6d"></div>
<div style="position:absolute;left:36px;top:245px;width:942px;height:1px;background:#c0c0c0"></div>
<div style="position:absolute;left:3px;top:245px;width:32px;height:1px;background:#6d6d6d"></div>
<div style="position:absolute;left:36px;top:263px;width:942px;height:1px;background:#c0c0c0"></div>
<div style="position:absolute;left:3px;top:263px;width:32px;height:1px;background:#6d6d6d"></div>
<div style="position:absolute;left:36px;top:281px;width:942px;height:1px;background:#c0c0c0"></div>
<div style="position:absolute;left:3px;top:281px;width:32px;height:1px;background:#6d6d6d"></div>
<div style="position:absolute;left:36px;top:299px;width:942px;height:1px;background:#c0c0c0"></div>
<div style="position:absolute;left:3px;top:299px;width:32px;height:1px;background:#6d6d6d"></div>
<div style="position:absolute;left:36px;top:317px;width:942px;height:1px;background:#c0c0c0"></div>
<div style="position:absolute;left:3px;top:317px;width:32px;height:1px;background:#6d6d6d"></div>
<div style="position:absolute;left:36px;top:335px;width:942px;height:1px;background:#c0c0c0"></div>
<div style="position:absolute;left:3px;top:335px;width:32px;height:1px;background:#6d6d6d"></div>
<div style="position:absolute;left:36px;top:353px;width:942px;height:1px;background:#c0c0c0"></div>
<div style="position:absolute;left:3px;top:353px;width:32px;height:1px;background:#6d6d6d"></div>
<div style="position:absolute;left:36px;top:371px;width:942px;height:1px;background:#c0c0c0"></div>
<div style="position:absolute;left:3px;top:371px;width:32px;height:1px;background:#6d6d6d"></div>
<div style="position:absolute;left:36px;top:389px;width:942px;height:1px;background:#c0c0c0"></div>
<div style="position:absolute;left:3px;top:389px;width:32px;height:1px;background:#6d6d6d"></div>
<div style="position:absolute;left:36px;top:407px;width:942px;height:1px;background:#c0c0c0"></div>
<div style="position:absolute;left:3px;top:407px;width:32px;height:1px;background:#6d6d6d"></div>
<div style="position:absolute;left:36px;top:425px;width:942px;height:1px;background:#c0c0c0"></div>
<div style="position:absolute;left:3px;top:425px;width:32px;height:1px;background:#6d6d6d"></div>
<div style="position:absolute;left:36px;top:443px;width:942px;height:1px;background:#c0c0c0"></div>
<div style="position:absolute;left:3px;top:443px;width:32px;height:1px;background:#6d6d6d"></div>
<div style="position:absolute;left:36px;top:461px;width:942px;height:1px;background:#c0c0c0"></div>
<div style="position:absolute;left:3px;top:461px;width:32px;height:1px;background:#6d6d6d"></div>
<div style="position:absolute;left:36px;top:479px;width:942px;height:1px;background:#c0c0c0"></div>
<div style="position:absolute;left:3px;top:479px;width:32px;height:1px;background:#6d6d6d"></div>
<div style="position:absolute;left:36px;top:497px;width:942px;height:1px;background:#c0c0c0"></div>
<div style="position:absolute;left:3px;top:497px;width:32px;height:1px;background:#6d6d6d"></div>
<div style="position:absolute;left:36px;top:515px;width:942px;height:1px;background:#c0c0c0"></div>
<div style="position:absolute;left:3px;top:515px;width:32px;height:1px;background:#6d6d6d"></div>
<div style="position:absolute;left:36px;top:533px;width:942px;height:1px;background:#c0c0c0"></div>
<div style="position:absolute;left:3px;top:533px;width:32px;height:1px;background:#6d6d6d"></div>
<div style="position:absolute;left:36px;top:551px;width:942px;height:1px;background:#c0c0c0"></div>
<div style="position:absolute;left:3px;top:551px;width:32px;height:1px;background:#6d6d6d"></div>
<div style="position:absolute;left:36px;top:569px;width:942px;height:1px;background:#c0c0c0"></div>
<div style="position:absolute;left:3px;top:569px;width:32px;height:1px;background:#6d6d6d"></div>
<div style="position:absolute;left:36px;top:587px;width:942px;height:1px;background:#c0c0c0"></div>
<div style="position:absolute;left:3px;top:587px;width:32px;height:1px;background:#6d6d6d"></div>
<div style="position:absolute;left:36px;top:605px;width:942px;height:1px;background:#c0c0c0"></div>
<div style="position:absolute;left:3px;top:605px;width:32px;height:1px;background:#6d6d6d"></div>
<div style="position:absolute;left:36px;top:623px;width:942px;height:1px;background:#c0c0c0"></div>
<div style="position:absolute;left:3px;top:623px;width:32px;height:1px;background:#6d6d6d"></div>
<div style="position:absolute;left:36px;top:641px;width:942px;height:1px;background:#c0c0c0"></div>
<div style="position:absolute;left:3px;top:641px;width:32px;height:1px;background:#6d6d6d"></div>
<div style="position:absolute;left:36px;top:659px;width:942px;height:1px;background:#c0c0c0"></div>
<div style="position:absolute;left:3px;top:659px;width:32px;height:1px;background:#6d6d6d"></div>
<div style="position:absolute;left:36px;top:677px;width:942px;height:1px;background:#c0c0c0"></div>
<div style="position:absolute;left:3px;top:677px;width:32px;height:1px;background:#6d6d6d"></div>
<div style="position:absolute;left:36px;top:695px;width:942px;height:1px;background:#c0c0c0"></div>
<div style="position:absolute;left:3px;top:695px;width:32px;height:1px;background:#6d6d6d"></div>
<div style="position:absolute;left:36px;top:713px;width:942px;height:1px;background:#c0c0c0"></div>
<div style="position:absolute;left:3px;top:713px;width:32px;height:1px;background:#6d6d6d"></div>
<div style="position:absolute;left:36px;top:731px;width:942px;height:1px;background:#c0c0c0"></div>
<div style="position:absolute;left:3px;top:731px;width:32px;height:1px;background:#6d6d6d"></div>
<div style="position:absolute;left:36px;top:749px;width:942px;height:1px;background:#c0c0c0"></div>
<div style="position:absolute;left:3px;top:749px;width:32px;height:1px;background:#6d6d6d"></div>
<div style="position:absolute;left:36px;top:767px;width:942px;height:1px;background:#c0c0c0"></div>
<div style="position:absolute;left:3px;top:767px;width:32px;height:1px;background:#6d6d6d"></div>
<div style="position:absolute;left:36px;top:785px;width:942px;height:1px;background:#c0c0c0"></div>
<div style="position:absolute;left:3px;top:785px;width:32px;height:1px;background:#6d6d6d"></div>
<div style="position:absolute;left:532px;top:138px;width:1px;height:663px;background:#c0c0c0"></div>
<div style="position:absolute;left:613px;top:138px;width:1px;height:663px;background:#c0c0c0"></div>
<div style="position:absolute;left:694px;top:138px;width:1px;height:663px;background:#c0c0c0"></div>
<div style="position:absolute;left:775px;top:138px;width:1px;height:663px;background:#c0c0c0"></div>
<div style="position:absolute;left:856px;top:138px;width:1px;height:663px;background:#c0c0c0"></div>
<div style="position:absolute;left:937px;top:138px;width:1px;height:663px;background:#c0c0c0"></div>
<div style="position:absolute;left:3px;top:138px;width:32px;height:663px;background:#f0f0f0"></div>
<div style="position:absolute;left:3px;top:155px;width:32px;height:1px;background:#6d6d6d"></div>
<div style="position:absolute;left:3px;top:173px;width:32px;height:1px;background:#6d6d6d"></div>
<div style="position:absolute;left:3px;top:191px;width:32px;height:1px;background:#6d6d6d"></div>
<div style="position:absolute;left:3px;top:209px;width:32px;height:1px;background:#6d6d6d"></div>
<div style="position:absolute;left:3px;top:227px;width:32px;height:1px;background:#6d6d6d"></div>
<div style="position:absolute;left:3px;top:245px;width:32px;height:1px;background:#6d6d6d"></div>
<div style="position:absolute;left:3px;top:263px;width:32px;height:1px;background:#6d6d6d"></div>
<div style="position:absolute;left:3px;top:281px;width:32px;height:1px;background:#6d6d6d"></div>
<div style="position:absolute;left:3px;top:299px;width:32px;height:1px;background:#6d6d6d"></div>
<div style="position:absolute;left:3px;top:317px;width:32px;height:1px;background:#6d6d6d"></div>
<div style="position:absolute;left:3px;top:335px;width:32px;height:1px;background:#6d6d6d"></div>
<div style="position:absolute;left:3px;top:353px;width:32px;height:1px;background:#6d6d6d"></div>
<div style="position:absolute;left:3px;top:371px;width:32px;height:1px;background:#6d6d6d"></div>
<div style="position:absolute;left:3px;top:389px;width:32px;height:1px;background:#6d6d6d"></div>
<div style="position:absolute;left:3px;top:407px;width:32px;height:1px;background:#6d6d6d"></div>
<div style="position:absolute;left:3px;top:425px;width:32px;height:1px;background:#6d6d6d"></div>
<div style="position:absolute;left:3px;top:443px;width:32px;height:1px;background:#6d6d6d"></div>
<div style="position:absolute;left:3px;top:461px;width:32px;height:1px;background:#6d6d6d"></div>
<div style="position:absolute;left:3px;top:479px;width:32px;height:1px;background:#6d6d6d"></div>
<div style="position:absolute;left:3px;top:497px;width:32px;height:1px;background:#6d6d6d"></div>
<div style="position:absolute;left:3px;top:515px;width:32px;height:1px;background:#6d6d6d"></div>
<div style="position:absolute;left:3px;top:533px;width:32px;height:1px;background:#6d6d6d"></div>
<div style="position:absolute;left:3px;top:551px;width:32px;height:1px;background:#6d6d6d"></div>
<div style="position:absolute;left:3px;top:569px;width:32px;height:1px;background:#6d6d6d"></div>
<div style="position:absolute;left:3px;top:587px;width:32px;height:1px;background:#6d6d6d"></div>
<div style="position:absolute;left:3px;top:605px;width:32px;height:1px;background:#6d6d6d"></div>
<div style="position:absolute;left:3px;top:623px;width:32px;height:1px;background:#6d6d6d"></div>
<div style="position:absolute;left:3px;top:641px;width:32px;height:1px;background:#6d6d6d"></div>
<div style="position:absolute;left:3px;top:659px;width:32px;height:1px;background:#6d6d6d"></div>
<div style="position:absolute;left:3px;top:677px;width:32px;height:1px;background:#6d6d6d"></div>
<div style="position:absolute;left:3px;top:695px;width:32px;height:1px;background:#6d6d6d"></div>
<div style="position:absolute;left:3px;top:713px;width:32px;height:1px;background:#6d6d6d"></div>
<div style="position:absolute;left:3px;top:731px;width:32px;height:1px;background:#6d6d6d"></div>
<div style="position:absolute;left:3px;top:749px;width:32px;height:1px;background:#6d6d6d"></div>
<div style="position:absolute;left:3px;top:767px;width:32px;height:1px;background:#6d6d6d"></div>
<div style="position:absolute;left:3px;top:785px;width:32px;height:1px;background:#6d6d6d"></div>
<div style="position:absolute;left:36px;top:138px;width:942px;height:17px;overflow:hidden">
<div style="position:absolute;left:1px;top:1px;white-space:pre;font:15px 'Liberation Mono', monospace;color:#000;transform:scaleY(1.1);transform-origin:0 12.5px">|&#160;&#160;|&#160;&#160;|&#160;&#160;+-&#160;CMD&#160;Slew&#160;Rate&#160;Training</div>
</div>
<div style="position:absolute;left:3px;top:138px;width:32px;height:17px;border:1px solid #fff;box-sizing:border-box;background:#f0f0f0"></div>
<div style="position:absolute;left:10.3px;top:140px;white-space:pre;font:12px 'Liberation Sans', sans-serif;color:#000;transform:scaleX(0.8750);transform-origin:0 0;">275</div>
<div style="position:absolute;left:36px;top:156px;width:942px;height:17px;overflow:hidden">
<div style="position:absolute;left:1px;top:1px;white-space:pre;font:15px 'Liberation Mono', monospace;color:#000;transform:scaleY(1.1);transform-origin:0 12.5px">|&#160;&#160;|&#160;&#160;|&#160;&#160;+-&#160;CMD&#160;Drive&#160;Strength&#160;/&#160;Tx&#160;Equalization</div>
</div>
<div style="position:absolute;left:3px;top:156px;width:32px;height:17px;border:1px solid #fff;box-sizing:border-box;background:#f0f0f0"></div>
<div style="position:absolute;left:10.3px;top:158px;white-space:pre;font:12px 'Liberation Sans', sans-serif;color:#000;transform:scaleX(0.8750);transform-origin:0 0;">276</div>
<div style="position:absolute;left:36px;top:174px;width:942px;height:17px;overflow:hidden">
<div style="position:absolute;left:1px;top:1px;white-space:pre;font:15px 'Liberation Mono', monospace;color:#000;transform:scaleY(1.1);transform-origin:0 12.5px">|&#160;&#160;|&#160;&#160;|&#160;&#160;+-&#160;CMD&#160;Normalization</div>
</div>
<div style="position:absolute;left:3px;top:174px;width:32px;height:17px;border:1px solid #fff;box-sizing:border-box;background:#f0f0f0"></div>
<div style="position:absolute;left:10.3px;top:176px;white-space:pre;font:12px 'Liberation Sans', sans-serif;color:#000;transform:scaleX(0.8750);transform-origin:0 0;">277</div>
<div style="position:absolute;left:36px;top:192px;width:942px;height:17px;overflow:hidden">
<div style="position:absolute;left:1px;top:1px;white-space:pre;font:15px 'Liberation Mono', monospace;color:#000;transform:scaleY(1.1);transform-origin:0 12.5px">|&#160;&#160;|&#160;&#160;|&#160;&#160;+-&#160;Read&#160;Voltage&#160;Centering&#160;1D</div>
</div>
<div style="position:absolute;left:3px;top:192px;width:32px;height:17px;border:1px solid #fff;box-sizing:border-box;background:#f0f0f0"></div>
<div style="position:absolute;left:10.3px;top:194px;white-space:pre;font:12px 'Liberation Sans', sans-serif;color:#000;transform:scaleX(0.8750);transform-origin:0 0;">278</div>
<div style="position:absolute;left:36px;top:210px;width:942px;height:17px;overflow:hidden">
<div style="position:absolute;left:1px;top:1px;white-space:pre;font:15px 'Liberation Mono', monospace;color:#000;transform:scaleY(1.1);transform-origin:0 12.5px">|&#160;&#160;|&#160;&#160;|&#160;&#160;+-&#160;Write&#160;TCO&#160;Comp&#160;Training</div>
</div>
<div style="position:absolute;left:3px;top:210px;width:32px;height:17px;border:1px solid #fff;box-sizing:border-box;background:#f0f0f0"></div>
<div style="position:absolute;left:10.3px;top:212px;white-space:pre;font:12px 'Liberation Sans', sans-serif;color:#000;transform:scaleX(0.8750);transform-origin:0 0;">279</div>
<div style="position:absolute;left:36px;top:228px;width:942px;height:17px;overflow:hidden">
<div style="position:absolute;left:1px;top:1px;white-space:pre;font:15px 'Liberation Mono', monospace;color:#000;transform:scaleY(1.1);transform-origin:0 12.5px">|&#160;&#160;|&#160;&#160;|&#160;&#160;+-&#160;Clock&#160;TCO&#160;Comp&#160;Training</div>
</div>
<div style="position:absolute;left:3px;top:228px;width:32px;height:17px;border:1px solid #fff;box-sizing:border-box;background:#f0f0f0"></div>
<div style="position:absolute;left:10.3px;top:230px;white-space:pre;font:12px 'Liberation Sans', sans-serif;color:#000;transform:scaleX(0.8750);transform-origin:0 0;">280</div>
<div style="position:absolute;left:36px;top:246px;width:942px;height:17px;overflow:hidden">
<div style="position:absolute;left:1px;top:1px;white-space:pre;font:15px 'Liberation Mono', monospace;color:#000;transform:scaleY(1.1);transform-origin:0 12.5px">|&#160;&#160;|&#160;&#160;|&#160;&#160;+-&#160;Write&#160;TCO&#160;Dqs&#160;Training</div>
</div>
<div style="position:absolute;left:3px;top:246px;width:32px;height:17px;border:1px solid #fff;box-sizing:border-box;background:#f0f0f0"></div>
<div style="position:absolute;left:10.3px;top:248px;white-space:pre;font:12px 'Liberation Sans', sans-serif;color:#000;transform:scaleX(0.8750);transform-origin:0 0;">281</div>
<div style="position:absolute;left:36px;top:264px;width:942px;height:17px;overflow:hidden">
<div style="position:absolute;left:1px;top:1px;white-space:pre;font:15px 'Liberation Mono', monospace;color:#000;transform:scaleY(1.1);transform-origin:0 12.5px">|&#160;&#160;|&#160;&#160;|&#160;&#160;+-&#160;Duty&#160;Cycle&#160;Correction</div>
</div>
<div style="position:absolute;left:3px;top:264px;width:32px;height:17px;border:1px solid #fff;box-sizing:border-box;background:#f0f0f0"></div>
<div style="position:absolute;left:10.3px;top:266px;white-space:pre;font:12px 'Liberation Sans', sans-serif;color:#000;transform:scaleX(0.8750);transform-origin:0 0;">282</div>
<div style="position:absolute;left:36px;top:282px;width:942px;height:17px;overflow:hidden">
<div style="position:absolute;left:1px;top:1px;white-space:pre;font:15px 'Liberation Mono', monospace;color:#000;transform:scaleY(1.1);transform-origin:0 12.5px">|&#160;&#160;|&#160;&#160;|&#160;&#160;+-&#160;DQ&#160;DFE&#160;Training</div>
</div>
<div style="position:absolute;left:3px;top:282px;width:32px;height:17px;border:1px solid #fff;box-sizing:border-box;background:#f0f0f0"></div>
<div style="position:absolute;left:10.3px;top:284px;white-space:pre;font:12px 'Liberation Sans', sans-serif;color:#000;transform:scaleX(0.8750);transform-origin:0 0;">283</div>
<div style="position:absolute;left:36px;top:300px;width:942px;height:17px;overflow:hidden">
<div style="position:absolute;left:1px;top:1px;white-space:pre;font:15px 'Liberation Mono', monospace;color:#000;transform:scaleY(1.1);transform-origin:0 12.5px">|&#160;&#160;|&#160;&#160;|&#160;&#160;+-&#160;Sense&#160;Amp&#160;Offset&#160;Correction</div>
</div>
<div style="position:absolute;left:3px;top:300px;width:32px;height:17px;border:1px solid #fff;box-sizing:border-box;background:#f0f0f0"></div>
<div style="position:absolute;left:10.3px;top:302px;white-space:pre;font:12px 'Liberation Sans', sans-serif;color:#000;transform:scaleX(0.8750);transform-origin:0 0;">284</div>
<div style="position:absolute;left:36px;top:318px;width:942px;height:17px;overflow:hidden">
<div style="position:absolute;left:1px;top:1px;white-space:pre;font:15px 'Liberation Mono', monospace;color:#000;transform:scaleY(1.1);transform-origin:0 12.5px">|&#160;&#160;|&#160;&#160;|&#160;&#160;+-&#160;Periodic&#160;DCC&#160;Enable</div>
</div>
<div style="position:absolute;left:3px;top:318px;width:32px;height:17px;border:1px solid #fff;box-sizing:border-box;background:#f0f0f0"></div>
<div style="position:absolute;left:10.3px;top:320px;white-space:pre;font:12px 'Liberation Sans', sans-serif;color:#000;transform:scaleX(0.8750);transform-origin:0 0;">285</div>
<div style="position:absolute;left:36px;top:336px;width:942px;height:17px;overflow:hidden">
<div style="position:absolute;left:1px;top:1px;white-space:pre;font:15px 'Liberation Mono', monospace;color:#000;transform:scaleY(1.1);transform-origin:0 12.5px">|&#160;&#160;|&#160;&#160;|&#160;&#160;+-&#160;Rank&#160;Margin&#160;Tool&#160;Per&#160;Bit</div>
</div>
<div style="position:absolute;left:3px;top:336px;width:32px;height:17px;border:1px solid #fff;box-sizing:border-box;background:#f0f0f0"></div>
<div style="position:absolute;left:10.3px;top:338px;white-space:pre;font:12px 'Liberation Sans', sans-serif;color:#000;transform:scaleX(0.8750);transform-origin:0 0;">286</div>
<div style="position:absolute;left:36px;top:354px;width:942px;height:17px;overflow:hidden">
<div style="position:absolute;left:1px;top:1px;white-space:pre;font:15px 'Liberation Mono', monospace;color:#000;transform:scaleY(1.1);transform-origin:0 12.5px">|&#160;&#160;|&#160;&#160;|&#160;&#160;+-&#160;Read&#160;Timing&#160;Optimization</div>
</div>
<div style="position:absolute;left:3px;top:354px;width:32px;height:17px;border:1px solid #fff;box-sizing:border-box;background:#f0f0f0"></div>
<div style="position:absolute;left:10.3px;top:356px;white-space:pre;font:12px 'Liberation Sans', sans-serif;color:#000;transform:scaleX(0.8750);transform-origin:0 0;">287</div>
<div style="position:absolute;left:36px;top:372px;width:942px;height:17px;overflow:hidden">
<div style="position:absolute;left:1px;top:1px;white-space:pre;font:15px 'Liberation Mono', monospace;color:#000;transform:scaleY(1.1);transform-origin:0 12.5px">|&#160;&#160;|&#160;&#160;|</div>
</div>
<div style="position:absolute;left:3px;top:372px;width:32px;height:17px;border:1px solid #fff;box-sizing:border-box;background:#f0f0f0"></div>
<div style="position:absolute;left:10.3px;top:374px;white-space:pre;font:12px 'Liberation Sans', sans-serif;color:#000;transform:scaleX(0.8750);transform-origin:0 0;">288</div>
<div style="position:absolute;left:36px;top:390px;width:942px;height:17px;overflow:hidden">
<div style="position:absolute;left:1px;top:1px;white-space:pre;font:15px 'Liberation Mono', monospace;color:#000;transform:scaleY(1.1);transform-origin:0 12.5px">|&#160;&#160;|&#160;&#160;+-&#160;Main&#160;Timing&#160;Configuration</div>
</div>
<div style="position:absolute;left:3px;top:390px;width:32px;height:17px;border:1px solid #fff;box-sizing:border-box;background:#f0f0f0"></div>
<div style="position:absolute;left:10.3px;top:392px;white-space:pre;font:12px 'Liberation Sans', sans-serif;color:#000;transform:scaleX(0.8750);transform-origin:0 0;">289</div>
<div style="position:absolute;left:36px;top:408px;width:942px;height:17px;overflow:hidden">
<div style="position:absolute;left:1px;top:1px;white-space:pre;font:15px 'Liberation Mono', monospace;color:#000;transform:scaleY(1.1);transform-origin:0 12.5px">|&#160;&#160;|&#160;&#160;+-&#160;Command&#160;Rate</div>
</div>
<div style="position:absolute;left:3px;top:408px;width:32px;height:17px;border:1px solid #fff;box-sizing:border-box;background:#f0f0f0"></div>
<div style="position:absolute;left:10.3px;top:410px;white-space:pre;font:12px 'Liberation Sans', sans-serif;color:#000;transform:scaleX(0.8750);transform-origin:0 0;">290</div>
<div style="position:absolute;left:36px;top:426px;width:942px;height:17px;overflow:hidden">
<div style="position:absolute;left:1px;top:1px;white-space:pre;font:15px 'Liberation Mono', monospace;color:#000;transform:scaleY(1.1);transform-origin:0 12.5px">|&#160;&#160;|&#160;&#160;+-&#160;tCL</div>
</div>
<div style="position:absolute;left:3px;top:426px;width:32px;height:17px;border:1px solid #fff;box-sizing:border-box;background:#f0f0f0"></div>
<div style="position:absolute;left:10.3px;top:428px;white-space:pre;font:12px 'Liberation Sans', sans-serif;color:#000;transform:scaleX(0.8750);transform-origin:0 0;">291</div>
<div style="position:absolute;left:36px;top:444px;width:942px;height:17px;overflow:hidden">
<div style="position:absolute;left:1px;top:1px;white-space:pre;font:15px 'Liberation Mono', monospace;color:#000;transform:scaleY(1.1);transform-origin:0 12.5px">|&#160;&#160;|&#160;&#160;+-&#160;tRCD</div>
</div>
<div style="position:absolute;left:3px;top:444px;width:32px;height:17px;border:1px solid #fff;box-sizing:border-box;background:#f0f0f0"></div>
<div style="position:absolute;left:10.3px;top:446px;white-space:pre;font:12px 'Liberation Sans', sans-serif;color:#000;transform:scaleX(0.8750);transform-origin:0 0;">292</div>
<div style="position:absolute;left:36px;top:462px;width:942px;height:17px;overflow:hidden">
<div style="position:absolute;left:1px;top:1px;white-space:pre;font:15px 'Liberation Mono', monospace;color:#000;transform:scaleY(1.1);transform-origin:0 12.5px">|&#160;&#160;|&#160;&#160;+-&#160;tRP</div>
</div>
<div style="position:absolute;left:3px;top:462px;width:32px;height:17px;border:1px solid #fff;box-sizing:border-box;background:#f0f0f0"></div>
<div style="position:absolute;left:10.3px;top:464px;white-space:pre;font:12px 'Liberation Sans', sans-serif;color:#000;transform:scaleX(0.8750);transform-origin:0 0;">293</div>
<div style="position:absolute;left:36px;top:480px;width:942px;height:17px;overflow:hidden">
<div style="position:absolute;left:1px;top:1px;white-space:pre;font:15px 'Liberation Mono', monospace;color:#000;transform:scaleY(1.1);transform-origin:0 12.5px">|&#160;&#160;|&#160;&#160;+-&#160;tRAS</div>
</div>
<div style="position:absolute;left:3px;top:480px;width:32px;height:17px;border:1px solid #fff;box-sizing:border-box;background:#f0f0f0"></div>
<div style="position:absolute;left:10.3px;top:482px;white-space:pre;font:12px 'Liberation Sans', sans-serif;color:#000;transform:scaleX(0.8750);transform-origin:0 0;">294</div>
<div style="position:absolute;left:36px;top:498px;width:942px;height:17px;overflow:hidden">
<div style="position:absolute;left:1px;top:1px;white-space:pre;font:15px 'Liberation Mono', monospace;color:#000;transform:scaleY(1.1);transform-origin:0 12.5px">|&#160;&#160;|&#160;&#160;+-&#160;tRFC</div>
</div>
<div style="position:absolute;left:3px;top:498px;width:32px;height:17px;border:1px solid #fff;box-sizing:border-box;background:#f0f0f0"></div>
<div style="position:absolute;left:10.3px;top:500px;white-space:pre;font:12px 'Liberation Sans', sans-serif;color:#000;transform:scaleX(0.8750);transform-origin:0 0;">295</div>
<div style="position:absolute;left:36px;top:516px;width:942px;height:17px;overflow:hidden">
<div style="position:absolute;left:1px;top:1px;white-space:pre;font:15px 'Liberation Mono', monospace;color:#000;transform:scaleY(1.1);transform-origin:0 12.5px">|&#160;&#160;|&#160;&#160;|</div>
</div>
<div style="position:absolute;left:3px;top:516px;width:32px;height:17px;border:1px solid #fff;box-sizing:border-box;background:#f0f0f0"></div>
<div style="position:absolute;left:10.3px;top:518px;white-space:pre;font:12px 'Liberation Sans', sans-serif;color:#000;transform:scaleX(0.8750);transform-origin:0 0;">296</div>
<div style="position:absolute;left:36px;top:534px;width:942px;height:17px;overflow:hidden">
<div style="position:absolute;left:1px;top:1px;white-space:pre;font:15px 'Liberation Mono', monospace;color:#000;transform:scaleY(1.1);transform-origin:0 12.5px">|&#160;&#160;|&#160;&#160;+-&#160;Sub&#160;Timing&#160;Configuration</div>
</div>
<div style="position:absolute;left:3px;top:534px;width:32px;height:17px;border:1px solid #fff;box-sizing:border-box;background:#f0f0f0"></div>
<div style="position:absolute;left:10.3px;top:536px;white-space:pre;font:12px 'Liberation Sans', sans-serif;color:#000;transform:scaleX(0.8750);transform-origin:0 0;">297</div>
<div style="position:absolute;left:36px;top:552px;width:942px;height:17px;overflow:hidden">
<div style="position:absolute;left:1px;top:1px;white-space:pre;font:15px 'Liberation Mono', monospace;color:#000;transform:scaleY(1.1);transform-origin:0 12.5px">|&#160;&#160;|&#160;&#160;|&#160;&#160;+-&#160;tREFI</div>
</div>
<div style="position:absolute;left:3px;top:552px;width:32px;height:17px;border:1px solid #fff;box-sizing:border-box;background:#f0f0f0"></div>
<div style="position:absolute;left:10.3px;top:554px;white-space:pre;font:12px 'Liberation Sans', sans-serif;color:#000;transform:scaleX(0.8750);transform-origin:0 0;">298</div>
<div style="position:absolute;left:36px;top:570px;width:942px;height:17px;overflow:hidden">
<div style="position:absolute;left:1px;top:1px;white-space:pre;font:15px 'Liberation Mono', monospace;color:#000;transform:scaleY(1.1);transform-origin:0 12.5px">|&#160;&#160;|&#160;&#160;|&#160;&#160;+-&#160;tWR</div>
</div>
<div style="position:absolute;left:3px;top:570px;width:32px;height:17px;border:1px solid #fff;box-sizing:border-box;background:#f0f0f0"></div>
<div style="position:absolute;left:10.3px;top:572px;white-space:pre;font:12px 'Liberation Sans', sans-serif;color:#000;transform:scaleX(0.8750);transform-origin:0 0;">299</div>
<div style="position:absolute;left:36px;top:588px;width:942px;height:17px;overflow:hidden">
<div style="position:absolute;left:1px;top:1px;white-space:pre;font:15px 'Liberation Mono', monospace;color:#000;transform:scaleY(1.1);transform-origin:0 12.5px">|&#160;&#160;|&#160;&#160;|&#160;&#160;+-&#160;tWR_MR</div>
</div>
<div style="position:absolute;left:3px;top:588px;width:32px;height:17px;border:1px solid #fff;box-sizing:border-box;background:#f0f0f0"></div>
<div style="position:absolute;left:10.3px;top:590px;white-space:pre;font:12px 'Liberation Sans', sans-serif;color:#000;transform:scaleX(0.8750);transform-origin:0 0;">300</div>
<div style="position:absolute;left:36px;top:606px;width:942px;height:17px;overflow:hidden">
<div style="position:absolute;left:1px;top:1px;white-space:pre;font:15px 'Liberation Mono', monospace;color:#000;transform:scaleY(1.1);transform-origin:0 12.5px">|&#160;&#160;|&#160;&#160;|&#160;&#160;+-&#160;tWTR</div>
</div>
<div style="position:absolute;left:3px;top:606px;width:32px;height:17px;border:1px solid #fff;box-sizing:border-box;background:#f0f0f0"></div>
<div style="position:absolute;left:10.3px;top:608px;white-space:pre;font:12px 'Liberation Sans', sans-serif;color:#000;transform:scaleX(0.8750);transform-origin:0 0;">301</div>
<div style="position:absolute;left:36px;top:624px;width:942px;height:17px;overflow:hidden">
<div style="position:absolute;left:1px;top:1px;white-space:pre;font:15px 'Liberation Mono', monospace;color:#000;transform:scaleY(1.1);transform-origin:0 12.5px">|&#160;&#160;|&#160;&#160;|&#160;&#160;+-&#160;tWTR_L</div>
</div>
<div style="position:absolute;left:3px;top:624px;width:32px;height:17px;border:1px solid #fff;box-sizing:border-box;background:#f0f0f0"></div>
<div style="position:absolute;left:10.3px;top:626px;white-space:pre;font:12px 'Liberation Sans', sans-serif;color:#000;transform:scaleX(0.8750);transform-origin:0 0;">302</div>
<div style="position:absolute;left:36px;top:642px;width:942px;height:17px;overflow:hidden">
<div style="position:absolute;left:1px;top:1px;white-space:pre;font:15px 'Liberation Mono', monospace;color:#000;transform:scaleY(1.1);transform-origin:0 12.5px">|&#160;&#160;|&#160;&#160;|&#160;&#160;+-&#160;tRRD</div>
</div>
<div style="position:absolute;left:3px;top:642px;width:32px;height:17px;border:1px solid #fff;box-sizing:border-box;background:#f0f0f0"></div>
<div style="position:absolute;left:10.3px;top:644px;white-space:pre;font:12px 'Liberation Sans', sans-serif;color:#000;transform:scaleX(0.8750);transform-origin:0 0;">303</div>
<div style="position:absolute;left:36px;top:660px;width:942px;height:17px;overflow:hidden">
<div style="position:absolute;left:1px;top:1px;white-space:pre;font:15px 'Liberation Mono', monospace;color:#000;transform:scaleY(1.1);transform-origin:0 12.5px">|&#160;&#160;|&#160;&#160;|&#160;&#160;+-&#160;tRRD_L</div>
</div>
<div style="position:absolute;left:3px;top:660px;width:32px;height:17px;border:1px solid #fff;box-sizing:border-box;background:#f0f0f0"></div>
<div style="position:absolute;left:10.3px;top:662px;white-space:pre;font:12px 'Liberation Sans', sans-serif;color:#000;transform:scaleX(0.8750);transform-origin:0 0;">304</div>
<div style="position:absolute;left:36px;top:678px;width:942px;height:17px;overflow:hidden">
<div style="position:absolute;left:1px;top:1px;white-space:pre;font:15px 'Liberation Mono', monospace;color:#000;transform:scaleY(1.1);transform-origin:0 12.5px">|&#160;&#160;|&#160;&#160;|&#160;&#160;+-&#160;tRTP</div>
</div>
<div style="position:absolute;left:3px;top:678px;width:32px;height:17px;border:1px solid #fff;box-sizing:border-box;background:#f0f0f0"></div>
<div style="position:absolute;left:10.3px;top:680px;white-space:pre;font:12px 'Liberation Sans', sans-serif;color:#000;transform:scaleX(0.8750);transform-origin:0 0;">305</div>
<div style="position:absolute;left:36px;top:696px;width:942px;height:17px;overflow:hidden">
<div style="position:absolute;left:1px;top:1px;white-space:pre;font:15px 'Liberation Mono', monospace;color:#000;transform:scaleY(1.1);transform-origin:0 12.5px">|&#160;&#160;|&#160;&#160;|&#160;&#160;+-&#160;tRTP_MR</div>
</div>
<div style="position:absolute;left:3px;top:696px;width:32px;height:17px;border:1px solid #fff;box-sizing:border-box;background:#f0f0f0"></div>
<div style="position:absolute;left:10.3px;top:698px;white-space:pre;font:12px 'Liberation Sans', sans-serif;color:#000;transform:scaleX(0.8750);transform-origin:0 0;">306</div>
<div style="position:absolute;left:36px;top:714px;width:942px;height:17px;overflow:hidden">
<div style="position:absolute;left:1px;top:1px;white-space:pre;font:15px 'Liberation Mono', monospace;color:#000;transform:scaleY(1.1);transform-origin:0 12.5px">|&#160;&#160;|&#160;&#160;|&#160;&#160;+-&#160;tFAW</div>
</div>
<div style="position:absolute;left:3px;top:714px;width:32px;height:17px;border:1px solid #fff;box-sizing:border-box;background:#f0f0f0"></div>
<div style="position:absolute;left:10.3px;top:716px;white-space:pre;font:12px 'Liberation Sans', sans-serif;color:#000;transform:scaleX(0.8750);transform-origin:0 0;">307</div>
<div style="position:absolute;left:36px;top:732px;width:942px;height:17px;overflow:hidden">
<div style="position:absolute;left:1px;top:1px;white-space:pre;font:15px 'Liberation Mono', monospace;color:#000;transform:scaleY(1.1);transform-origin:0 12.5px">|&#160;&#160;|&#160;&#160;|&#160;&#160;+-&#160;tCWL</div>
</div>
<div style="position:absolute;left:3px;top:732px;width:32px;height:17px;border:1px solid #fff;box-sizing:border-box;background:#f0f0f0"></div>
<div style="position:absolute;left:10.3px;top:734px;white-space:pre;font:12px 'Liberation Sans', sans-serif;color:#000;transform:scaleX(0.8750);transform-origin:0 0;">308</div>
<div style="position:absolute;left:36px;top:750px;width:942px;height:17px;overflow:hidden">
<div style="position:absolute;left:1px;top:1px;white-space:pre;font:15px 'Liberation Mono', monospace;color:#000;transform:scaleY(1.1);transform-origin:0 12.5px">|&#160;&#160;|&#160;&#160;|&#160;&#160;+-&#160;tCWL_MR</div>
</div>
<div style="position:absolute;left:3px;top:750px;width:32px;height:17px;border:1px solid #fff;box-sizing:border-box;background:#f0f0f0"></div>
<div style="position:absolute;left:10.3px;top:752px;white-space:pre;font:12px 'Liberation Sans', sans-serif;color:#000;transform:scaleX(0.8750);transform-origin:0 0;">309</div>
<div style="position:absolute;left:36px;top:768px;width:942px;height:17px;overflow:hidden">
<div style="position:absolute;left:1px;top:1px;white-space:pre;font:15px 'Liberation Mono', monospace;color:#000;transform:scaleY(1.1);transform-origin:0 12.5px">|&#160;&#160;|&#160;&#160;|&#160;&#160;+-&#160;tCKE</div>
</div>
<div style="position:absolute;left:3px;top:768px;width:32px;height:17px;border:1px solid #fff;box-sizing:border-box;background:#f0f0f0"></div>
<div style="position:absolute;left:10.3px;top:770px;white-space:pre;font:12px 'Liberation Sans', sans-serif;color:#000;transform:scaleX(0.8750);transform-origin:0 0;">310</div>
<div style="position:absolute;left:36px;top:786px;width:942px;height:15px;overflow:hidden">
<div style="position:absolute;left:1px;top:1px;white-space:pre;font:15px 'Liberation Mono', monospace;color:#000;transform:scaleY(1.1);transform-origin:0 12.5px">|&#160;&#160;|&#160;&#160;|&#160;&#160;+-&#160;tCCD</div>
</div>
<div style="position:absolute;left:3px;top:786px;width:32px;height:15px;border:1px solid #fff;box-sizing:border-box;background:#f0f0f0"></div>
<div style="position:absolute;left:10.3px;top:788px;white-space:pre;font:12px 'Liberation Sans', sans-serif;color:#000;transform:scaleX(0.9150);transform-origin:0 0;">311</div>
<div style="position:absolute;left:978px;top:120px;width:17px;height:681px;background:#fff"></div>
<div style="position:absolute;left:979px;top:124px;width:16px;height:677px;background:#f0f0f0"></div>
<div style="position:absolute;left:978px;top:120px;width:17px;height:3px;background:#000"></div>
<svg style="position:absolute;left:982px;top:128px;" width="9" height="8" viewBox="0 0 9 8"><path d="M1 6.5L4.5 3L8 6.5" stroke="#505050" fill="none" stroke-width="2"/></svg>
<svg style="position:absolute;left:982px;top:789px;" width="9" height="8" viewBox="0 0 9 8"><path d="M1 1.5L4.5 5L8 1.5" stroke="#505050" fill="none" stroke-width="2"/></svg>
<div style="position:absolute;left:979px;top:454px;width:15px;height:41px;background:#cdcdcd"></div>
<div style="position:absolute;left:3px;top:801px;width:992px;height:17px;background:#f0f0f0"></div>
<div style="position:absolute;left:4px;top:802px;width:15px;height:15px;background:#d0d0d0;border:1px solid #c6c6c6;box-sizing:border-box"></div>
<div style="position:absolute;left:21px;top:802px;width:15px;height:15px;background:#d0d0d0;border:1px solid #c6c6c6;box-sizing:border-box"></div>
<div style="position:absolute;left:38px;top:802px;width:15px;height:15px;background:#d0d0d0;border:1px solid #c6c6c6;box-sizing:border-box"></div>
<div style="position:absolute;left:55px;top:802px;width:15px;height:15px;background:#d0d0d0;border:1px solid #c6c6c6;box-sizing:border-box"></div>
<svg style="position:absolute;left:4px;top:802px;" width="15" height="15" viewBox="0 0 15 15"><rect x="4" y="4" width="1.2" height="7" fill="#9a9a9a"/><path d="M10 4L6 7.5L10 11Z" fill="#9a9a9a"/><rect x="5.2" y="5" width="1" height="6" fill="#fff"/><rect x="10" y="5" width="1" height="6" fill="#fff"/></svg>
<svg style="position:absolute;left:21px;top:802px;" width="15" height="15" viewBox="0 0 15 15"><path d="M9.5 4L5.5 7.5L9.5 11Z" fill="#9a9a9a"/><rect x="9.5" y="5" width="1" height="6" fill="#fff"/></svg>
<svg style="position:absolute;left:38px;top:802px;" width="15" height="15" viewBox="0 0 15 15"><path d="M5.5 4L9.5 7.5L5.5 11Z" fill="#9a9a9a"/><path d="M5.5 11L9.5 7.5" stroke="#fff" stroke-width="1"/></svg>
<svg style="position:absolute;left:55px;top:802px;" width="15" height="15" viewBox="0 0 15 15"><path d="M4.5 4L8.5 7.5L4.5 11Z" fill="#9a9a9a"/><rect x="9.5" y="4" width="1.2" height="7" fill="#9a9a9a"/><path d="M4.5 11L8.5 7.5" stroke="#fff" stroke-width="1"/><rect x="8.6" y="5" width="1" height="6" fill="#fff"/></svg>
<svg style="position:absolute;left:70px;top:800px;" width="205" height="19" viewBox="0 0 205 19"><path d="M1 1L8.5 17.5H45.5L53 1" fill="#fff" stroke="#6d6d6d" stroke-width="1"/><path d="M53 1.5H196.5" fill="none" stroke="#707070" stroke-width="1"/><rect x="196.5" y="1.5" width="6" height="16" fill="#fff" stroke="#6d6d6d" stroke-width="1"/><path d="M202.5 1.5V17.5" stroke="#b0b0b0" stroke-width="1"/></svg>
<div style="position:absolute;left:80.4px;top:803px;white-space:pre;font:12px 'Liberation Sans', sans-serif;color:#000;transform:scaleX(0.9559);transform-origin:0 0;font-weight:bold;">Guide</div>
<svg style="position:absolute;left:277px;top:805px;" width="7" height="9" viewBox="0 0 7 9"><path d="M5.5 1L2 4.5L5.5 8" stroke="#505050" fill="none" stroke-width="2"/></svg>
<svg style="position:absolute;left:964px;top:805px;" width="7" height="9" viewBox="0 0 7 9"><path d="M1 1L4.5 4.5L1 8" stroke="#505050" fill="none" stroke-width="2"/></svg>
<div style="position:absolute;left:289px;top:802px;width:286px;height:15px;background:#cdcdcd"></div>
<div style="position:absolute;left:975px;top:801px;width:3px;height:17px;background:#000"></div>
<div style="position:absolute;left:978px;top:801px;width:17px;height:18px;background:#f0f0f0"></div>
<div style="position:absolute;left:1px;top:818px;width:1041px;height:23px;background:#f0f0f0"></div>
<div style="position:absolute;left:1px;top:819px;width:1041px;height:1px;background:#fdfdfd"></div>
<div style="position:absolute;left:11.4px;top:825px;white-space:pre;font:12px 'Liberation Sans', sans-serif;color:#000;transform:scaleX(0.9241);transform-origin:0 0;">Sheet 1 / 1</div>
<div style="position:absolute;left:252.5px;top:825px;white-space:pre;font:12px 'Liberation Sans', sans-serif;color:#000;transform:scaleX(0.9605);transform-origin:0 0;">Default</div>
<div style="position:absolute;left:529.0px;top:825px;white-space:pre;font:12px 'Liberation Sans', sans-serif;color:#000;transform:scaleX(0.8333);transform-origin:0 0;">STD</div>
<div style="position:absolute;left:694.6px;top:825px;white-space:pre;font:12px 'Liberation Sans', sans-serif;color:#000;transform:scaleX(0.9991);transform-origin:0 0;">CountA=1</div>
<div style="position:absolute;left:1001.7px;top:825px;white-space:pre;font:12px 'Liberation Sans', sans-serif;color:#000;transform:scaleX(0.8853);transform-origin:0 0;">100 %</div>
<svg style="position:absolute;left:848px;top:826px;" width="13" height="12" viewBox="0 0 13 12"><defs><linearGradient id="zg" x1="0" y1="0" x2="0" y2="1"><stop offset="0" stop-color="#f2f7fc"/><stop offset="1" stop-color="#b9cde0"/></linearGradient></defs><circle cx="6.5" cy="6" r="5.3" fill="url(#zg)" stroke="#3f5d7a" stroke-width="1"/><rect x="3.5" y="5.2" width="6" height="1.7" fill="#1d4b78"/></svg>
<svg style="position:absolute;left:976px;top:826px;" width="13" height="12" viewBox="0 0 13 12"><defs><linearGradient id="zg2" x1="0" y1="0" x2="0" y2="1"><stop offset="0" stop-color="#f2f7fc"/><stop offset="1" stop-color="#b9cde0"/></linearGradient></defs><circle cx="6.5" cy="6" r="5.3" fill="url(#zg2)" stroke="#3f5d7a" stroke-width="1"/><rect x="3.5" y="5.2" width="6" height="1.7" fill="#1d4b78"/><rect x="5.65" y="3" width="1.7" height="6" fill="#1d4b78"/></svg>
<div style="position:absolute;left:865px;top:830px;width:107px;height:4px;background:#f4f4f4;border:1px solid #8c8c8c;border-radius:1px;box-sizing:border-box"></div>
<div style="position:absolute;left:917px;top:824px;width:1px;height:3px;background:#8c8c8c"></div>
<svg style="position:absolute;left:912px;top:827px;" width="10" height="10" viewBox="0 0 10 10"><defs><linearGradient id="zt" x1="0" y1="0" x2="0" y2="1"><stop offset="0" stop-color="#a9c0d6"/><stop offset="1" stop-color="#48698a"/></linearGradient></defs><circle cx="5" cy="5" r="4.2" fill="url(#zt)" stroke="#3b5570" stroke-width="0.9"/></svg>
<div style="position:absolute;left:246px;top:823px;width:1px;height:16px;background:#a0a0a0"></div>
<div style="position:absolute;left:470px;top:823px;width:1px;height:16px;background:#a0a0a0"></div>
<div style="position:absolute;left:524px;top:823px;width:1px;height:16px;background:#a0a0a0"></div>
<div style="position:absolute;left:557px;top:823px;width:1px;height:16px;background:#a0a0a0"></div>
<div style="position:absolute;left:573px;top:823px;width:1px;height:16px;background:#a0a0a0"></div>
<div style="position:absolute;left:602px;top:823px;width:1px;height:16px;background:#a0a0a0"></div>
<div style="position:absolute;left:843px;top:823px;width:1px;height:16px;background:#a0a0a0"></div>
<div style="position:absolute;left:996px;top:823px;width:1px;height:16px;background:#a0a0a0"></div>
<div style="position:absolute;left:995px;top:86px;width:7px;height:733px;background:#f0f0f0"></div>
<div style="position:absolute;left:995px;top:85px;width:1px;height:34px;background:#a0a0a0"></div>
<div style="position:absolute;left:996px;top:86px;width:1px;height:733px;background:#fafafa"></div>
<div style="position:absolute;left:997px;top:818px;width:6px;height:1px;background:#a0a0a0"></div>
<div style="position:absolute;left:1002px;top:85px;width:39px;height:734px;background:#f0f0f0;border:1px solid #a0a0a0;box-sizing:border-box"></div>
<div style="position:absolute;left:1014px;top:98px;width:16px;height:2px;background:#3c4a57"></div>
<div style="position:absolute;left:1014px;top:102px;width:16px;height:2px;background:#3c4a57"></div>
<div style="position:absolute;left:1014px;top:106px;width:16px;height:2px;background:#3c4a57"></div>
<svg style="position:absolute;left:1022px;top:109px;" width="8" height="5" viewBox="0 0 8 5"><path d="M0 0H7.5L3.75 4Z" fill="#000"/></svg>
<div style="position:absolute;left:1011px;top:124px;width:23px;height:1px;background:#d8d8d8"></div>
<svg style="position:absolute;left:1012px;top:133px;" width="19" height="20" viewBox="0 0 19 20"><g fill="#d9d9d9" stroke="#c6c6c6" stroke-width="0.6">
<path d="M9.5 1L18 4.5L9.5 8L1 4.5Z"/>
<path d="M1 5.5L9 9V19L1 15.5Z"/>
<path d="M10 9L18 5.5V15.5L10 19Z"/>
</g>
<path d="M5 3L13.5 6.5M14 3L5.5 6.5M5 7.5V17.5M14 7.5V17.5M1 10.5L9 14M18 10.5L10 14" stroke="#f3f3f3" stroke-width="1.1"/></svg>
<svg style="position:absolute;left:1012px;top:167px;" width="21" height="21" viewBox="0 0 21 21"><path d="M3 5C5 2 9 1.5 11 4C14 3 16 7 14 11C17 13 15 18 12 18C9 18 6 18 4 19.5L6 12C4 10 2 8 3 5Z" fill="#cfcfcf"/>
<path d="M9 9C11 11 13 13 11 16" stroke="#e8e8e8" stroke-width="1.2" fill="none"/>
<path d="M1 9L2 8L3 9L2 10Z M10 1L11 0L12 1L11 2Z M18 12L19 11L20 12L19 13Z" fill="#c8c8c8"/>
<path d="M17 1L18 3L20 3L18.5 4.3L19 6.3L17 5.2L15 6.3L15.5 4.3L14 3L16 3Z" fill="#dedede" stroke="#cfcfcf" stroke-width="0.5"/></svg>
<svg style="position:absolute;left:1010px;top:201px;" width="24" height="22" viewBox="0 0 24 22"><g transform="rotate(-20 11.5 10)">
<rect x="3" y="4" width="17" height="12" fill="#ececec" stroke="#cfcfcf" stroke-width="1"/>
<rect x="5" y="6" width="13" height="8" fill="#e0e0e0"/>
<path d="M7 14V10L10 8L13 10V14Z" fill="#f3f3f3" stroke="#cfcfcf" stroke-width="0.8"/>
</g></svg>
<div style="position:absolute;left:1006px;top:233px;width:32px;height:32px;border:1px solid #a6a6a6;border-radius:3px;box-sizing:border-box"></div>
<svg style="position:absolute;left:1011px;top:237px;" width="22" height="23" viewBox="0 0 22 23"><defs><linearGradient id="sbc" x1="0" y1="0" x2="0" y2="1"><stop offset="0" stop-color="#ffc21a"/><stop offset="1" stop-color="#f07d00"/></linearGradient></defs>
<circle cx="11" cy="11.5" r="9.5" fill="#fff" stroke="url(#sbc)" stroke-width="2.8"/>
<path d="M11 17V18.5M4 11.5H5.5M16.5 11.5H18" stroke="#b8b8b8" stroke-width="0.8"/>
<circle cx="11" cy="11.5" r="4.3" fill="none" stroke="#c9c9c9" stroke-width="2"/>
<path d="M17 5.5L12.6 13.2L9.6 10.4Z" fill="#d9261c"/>
<path d="M5 17.5L9.4 9.8L12.4 12.6Z" fill="#2f80e0"/>
<circle cx="11" cy="11.5" r="1" fill="#fff"/>
<path d="M9.3 6.2V2.6L12.7 6.2V2.6" fill="none" stroke="#1a1a1a" stroke-width="1.2"/></svg>
<svg style="position:absolute;left:1011px;top:272px;" width="18" height="22" viewBox="0 0 18 22"><path d="M6.5 0.5H13L16.5 4V21.5H6.5Z" fill="#f2f2f2" stroke="#c9c9c9" stroke-width="1"/>
<path d="M13 0.5V4H16.5" fill="none" stroke="#c9c9c9" stroke-width="1"/>
<path d="M0.5 19.5C2.5 20 4 18.8 4.6 16.5L7.2 6C7.8 3.6 9.2 2.6 11.5 3" fill="none" stroke="#b4b4b4" stroke-width="1.4"/>
<path d="M4.2 9H9.5" stroke="#b4b4b4" stroke-width="1.1"/>
<path d="M8.5 12C10 11.5 11 12.5 11.5 14.5C12 16.5 13 18 15 17.5M14.5 12L9 18" fill="none" stroke="#b4b4b4" stroke-width="1.2"/></svg>
<svg style="position:absolute;left:997px;top:434px;" width="5" height="36" viewBox="0 0 5 36"><path d="M1 0.5L4 2.5L1 4.5Z" fill="#555"/><path d="M1 9H3.2L1 11.2Z" fill="#555"/><path d="M1 13H3.2L1 15.2Z" fill="#555"/><path d="M1 17H3.2L1 19.2Z" fill="#555"/><path d="M1 21H3.2L1 23.2Z" fill="#555"/><path d="M1 25H3.2L1 27.2Z" fill="#555"/><path d="M1 31.5L4 33.5L1 35.5Z" fill="#555"/></svg>
</body></html>
